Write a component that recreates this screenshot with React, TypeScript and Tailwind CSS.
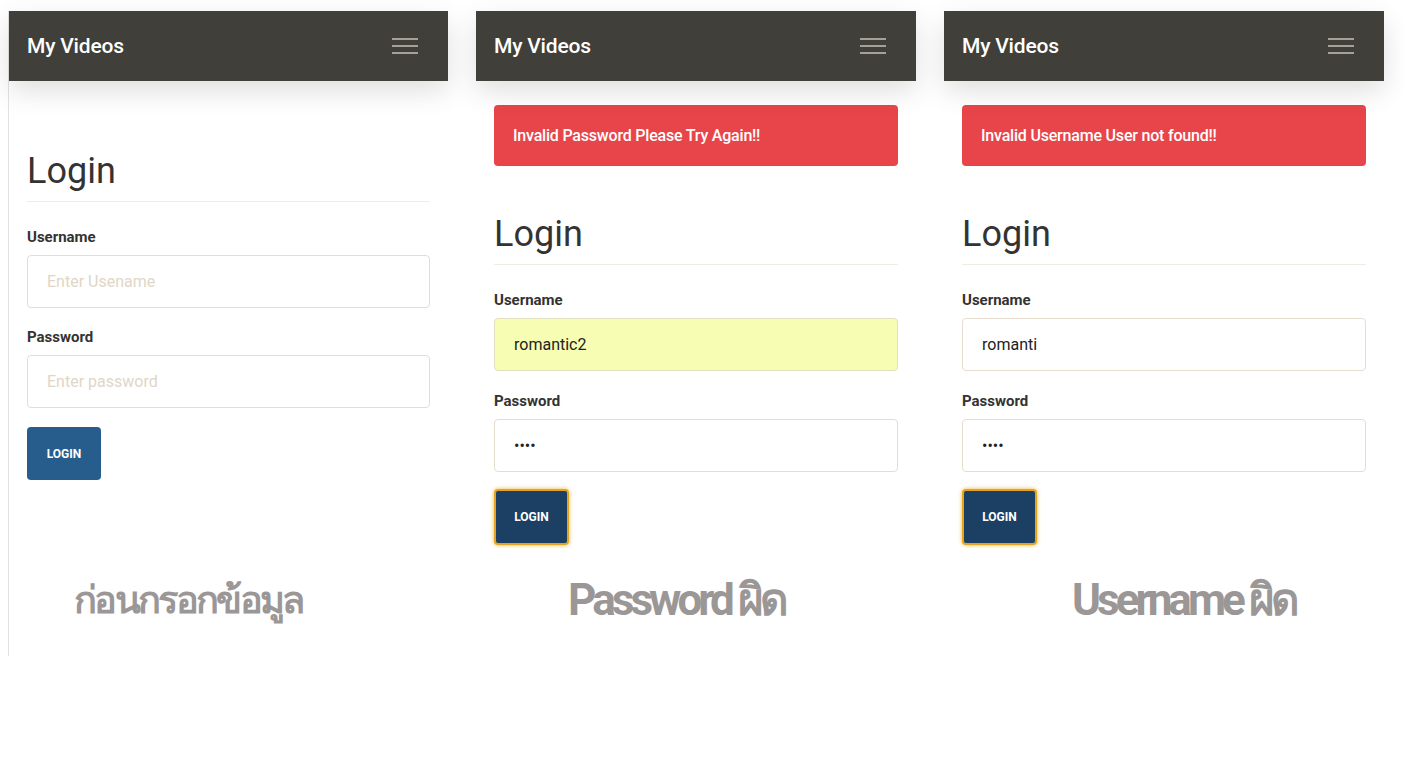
import React from 'react';

type PanelProps = {
  alert?: string;
  username?: string;
  password?: string;
  autofill?: boolean;
  focused?: boolean;
  caption: string;
  captionClass: string;
  bordered?: boolean;
};

const Navbar = () => (
  <div className="relative z-10 h-[70px] bg-[#403f39] flex items-center justify-between pl-[18px] pr-[30px] shadow-[0_10px_28px_rgba(0,0,0,0.13)]">
    <span className="text-white text-[21px] font-medium tracking-[-0.2px] pt-[2px]">My Videos</span>
    <div className="flex flex-col gap-[5px] w-[26px]">
      <span className="block h-[2px] bg-[#a4a199]" />
      <span className="block h-[2px] bg-[#a4a199]" />
      <span className="block h-[2px] bg-[#a4a199]" />
    </div>
  </div>
);

const Panel = ({ alert, username, password, autofill, focused, caption, captionClass, bordered }: PanelProps) => (
  <div className={`w-[440px] h-[645px] flex flex-col ${bordered ? 'border-l border-[#e2e2e2]' : ''}`}>
    <Navbar />
    <div className="px-[18px]">
      {alert && (
        <div className="mt-[24px] h-[61px] rounded-[4px] bg-[#e8454a] flex items-center px-[19px] text-white text-[16px] font-medium tracking-[-0.2px]">
          {alert}
        </div>
      )}

      <h1 className={`${alert ? 'mt-[48px]' : 'mt-[70px]'} text-[36px] leading-[40px] text-[#333] pb-[10px] border-b border-[#f0ece6]`}>
        Login
      </h1>

      <label className="block mt-[25px] text-[15px] leading-[20px] font-bold text-[#333]">Username</label>
      <input
        readOnly
        value={username ?? ''}
        placeholder="Enter Usename"
        className={`mt-[8px] block w-full h-[53px] rounded-[4px] border px-[19px] text-[16px] text-[#222] outline-none placeholder:text-[#e1d6c6] ${
          autofill ? 'bg-[#f7fdb2] border-[#e3e0c2]' : 'bg-white border-[#e6ddcf]'
        }`}
      />

      <label className={`block ${alert ? 'mt-[20px]' : 'mt-[19px]'} text-[15px] leading-[20px] font-bold text-[#333]`}>Password</label>
      <input
        readOnly
        type="password"
        value={password ?? ''}
        placeholder="Enter password"
        className="mt-[8px] block w-full h-[53px] rounded-[4px] border border-[#e6ddcf] bg-white px-[19px] text-[16px] text-[#222] outline-none placeholder:text-[#e1d6c6]"
      />

      {focused ? (
        <button className="mt-[17px] w-[75px] h-[56px] rounded-[4px] bg-[#1b4064] border-2 border-[#e5a41f] shadow-[0_0_4px_#f2b23c] text-white text-[12px] font-bold">
          LOGIN
        </button>
      ) : (
        <button className="mt-[19px] w-[74px] h-[53px] rounded-[4px] bg-[#265d8c] text-white text-[12px] font-bold">
          LOGIN
        </button>
      )}
    </div>

    <div className={`mt-auto mb-[26px] h-[60px] flex items-center ${captionClass}`}>
      <span className="font-bold text-[#9b9797] leading-none">{caption}</span>
    </div>
  </div>
);

export default function App() {
  return (
    <div className="w-[1404px] h-[760px] bg-white pt-[11px] pl-[8px] flex gap-[28px] font-['Roboto','Noto_Sans',sans-serif]">
      <Panel bordered caption="ก่อนกรอกข้อมูล" captionClass="pl-[65px] text-[38px] tracking-[-0.07em]" />
      <Panel
        alert="Invalid Password Please Try Again!!"
        username="romantic2"
        password="1234"
        autofill
        focused
        caption="Password ผิด"
        captionClass="pl-[92px] text-[44px] tracking-[-0.09em]"
      />
      <Panel
        alert="Invalid Username User not found!!"
        username="romanti"
        password="1234"
        focused
        caption="Username ผิด"
        captionClass="pl-[128px] text-[44px] tracking-[-0.09em]"
      />
    </div>
  );
}
